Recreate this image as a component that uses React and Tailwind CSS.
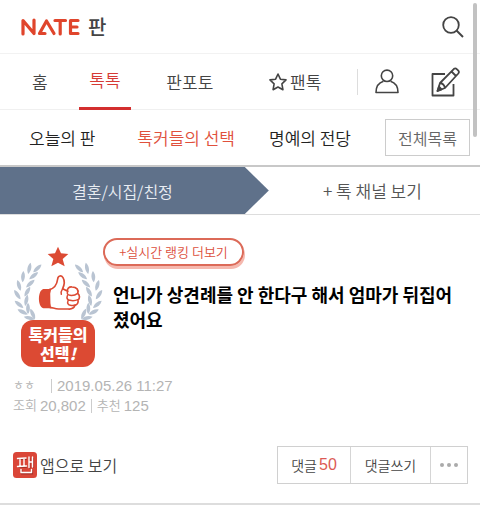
const leaves = [
  [112, 112, 46], [88, 112, 12], [101, 134, 52], [69, 137, 4], [91, 158, 48],
  [57, 163, -16], [82, 182, 30], [52, 191, -34], [79, 208, 12], [57, 220, -50],
  [84, 232, 0], [68, 243, -64], [98, 249, -24], [88, 261, -78],
];

function Branch({ flip }) {
  return (
    <g transform={flip ? 'translate(349 0) scale(-1 1)' : undefined} fill="#b9c4d2">
      {leaves.map(([x, y, a]) => (
        <path
          key={`${x}-${y}`}
          transform={`translate(${x} ${y}) rotate(${a})`}
          d="M0-17C7-8 8 6 0 17C-8 6-7-8 0-17Z"
        />
      ))}
    </g>
  );
}

function Emblem() {
  return (
    <div className="flex w-[90px] shrink-0 flex-col items-center">
      <svg viewBox="39 45 270 222" className="h-[74px] w-[90px]" aria-hidden="true">
        <path d="M174 47L183 67L205 69L188 84L194 106L174 95L154 106L160 84L143 69L165 67Z" fill="#dc4a33" />
        <Branch />
        <Branch flip />
        <path
          d="M148 176C164 172 171 160 173 144C174 133 184 132 189 140C195 150 193 162 188 173L203 181C200 173 207 167 216 168C230 168 237 177 233 187C240 192 240 202 234 207C236 216 231 222 225 223C222 232 214 235 204 234H176C164 234 157 229 149 229Z"
          fill="#fff" stroke="#dc4a33" strokeWidth="5" strokeLinejoin="round"
        />
        <path d="M154 174H130C113 178 112 226 130 232H154C147 212 147 192 154 174Z" fill="#dc4a33" />
        <path
          d="M203 181C200 188 203 193 210 193C219 194 228 191 233 187M202 194C199 202 203 208 210 208C219 210 229 208 234 206M204 209C201 217 205 222 211 223C216 224 222 224 226 222M188 173C184 179 182 184 184 190"
          fill="none" stroke="#dc4a33" strokeWidth="4.500" strokeLinecap="round"
        />
      </svg>
      <div className="flex h-[47px] w-[74px] flex-col items-center justify-center rounded-xl bg-[#dc4a33] text-base leading-[19px] font-black text-white">
        <span>톡커들의</span>
        <span>선택<i>!</i></span>
      </div>
    </div>
  );
}

function NateLogo() {
  return (
    <svg viewBox="0 0 59 18" className="h-[18px] w-[59px]" role="img" aria-label="NATE">
      <g fill="none" stroke="#e0452c" strokeWidth="3.200" strokeLinecap="round" strokeLinejoin="round">
        <path d="M2 16V2.500L13 15.500V2" />
        <path d="M24 15.500H18.500L25.500 3L33 15.500" />
        <path d="M34 2.500H44.500M39.200 2.500V16" />
        <path d="M57 2.500H49.500V15.500H57M49.500 9H56" />
      </g>
    </svg>
  );
}

function SearchIcon() {
  return (
    <svg viewBox="0 0 22 22" className="size-[22px]" fill="none" stroke="#444" strokeWidth="1.800" aria-hidden="true">
      <circle cx="9" cy="9" r="7.800" />
      <path d="M14.500 14.500L21 21" strokeWidth="2" />
    </svg>
  );
}

function StarIcon() {
  return (
    <svg viewBox="0 0 18 18" className="size-[18px]" fill="none" stroke="#444" strokeWidth="1.600" strokeLinejoin="round" aria-hidden="true">
      <path d="M9 1L11.400 6.200L17 6.900L12.900 10.800L13.900 16.700L9 14L4.100 16.700L5.100 10.800L1 6.900L6.600 6.200Z" />
    </svg>
  );
}

function PersonIcon() {
  return (
    <svg viewBox="0 0 24 25" className="h-[25px] w-6" fill="none" stroke="#444" strokeWidth="1.600" strokeLinejoin="round" aria-hidden="true">
      <circle cx="12" cy="6.800" r="5.700" />
      <path d="M8.500 12.300C4.500 13.500 1 17 1 23.500H23C23 17 19.500 13.500 15.500 12.300" />
    </svg>
  );
}

function WriteIcon() {
  return (
    <svg viewBox="0 0 29 30" className="h-[30px] w-[29px]" fill="none" stroke="#444" strokeWidth="1.800" strokeLinejoin="round" aria-hidden="true">
      <path d="M14 7H1.500V28.500H22.500V17" />
      <path d="M6.500 24L9 16L23 1.800Q24.500 .8 26 2.300L27.300 3.700Q28.500 5 27.300 6.500L14 21L6.500 24ZM9 16Q13 16.500 14 21M20.500 4.500L25 9" />
      <path d="M6.500 24L8 19.500L10.500 22.300Z" fill="#444" />
    </svg>
  );
}

function AppIcon() {
  return (
    <svg viewBox="0 0 24 26" className="h-[26px] w-6" aria-hidden="true">
      <rect width="24" height="26" rx="3.500" fill="#da4638" />
      <g fill="none" stroke="#a8322a" strokeWidth="1.500" transform="translate(.8 .8)">
        <path d="M4.500 6.500H13M4.500 14.500H13M16 5V16M19.500 5V15M8 17V21H18.500V17" />
      </g>
      <g fill="none" stroke="#fff" strokeWidth="1.400" strokeLinecap="round" strokeLinejoin="round">
        <path d="M4.500 6.500L13 6M7 7V14M11 7V14M4.500 14.500L13.500 14M16 5V15.500M19.500 5V15M16 10H19.500M8 17.500V20.500H18.500V17.500" />
      </g>
    </svg>
  );
}

export default function App() {
  return (
    <div className="relative w-full bg-white font-['Noto_Sans_CJK_KR',sans-serif] text-[17px] leading-[22px] font-[350] text-[#444]">
      <div className="absolute top-[3px] right-[3px] h-[134px] w-1 rounded-full bg-[#c2c2c2]" />

      <header className="flex h-[54px] items-center justify-between border-b border-[#f2f2f2] pr-4 pl-[21px]">
        <a href="#home" className="flex items-center gap-2">
          <NateLogo />
          <span className="text-xl font-medium">판</span>
        </a>
        <button type="button" aria-label="검색"><SearchIcon /></button>
      </header>

      <nav className="flex h-14 items-center justify-between border-b border-[#f0f0f0] pr-5 pl-8">
        <a href="#home">홈</a>
        <a href="#talk" className="-ml-1 flex h-14 items-center border-b-[3px] border-[#d32f2f] px-[10px] text-[#d63a35]">톡톡</a>
        <a href="#photo" className="mr-5">판포토</a>
        <a href="#fan" className="flex items-center gap-[3px]"><StarIcon />팬톡</a>
        <div className="flex items-center">
          <span className="mr-[17px] h-[26px] w-px bg-[#ddd]" />
          <button type="button" aria-label="내 정보" className="mr-8"><PersonIcon /></button>
          <button type="button" aria-label="글쓰기"><WriteIcon /></button>
        </div>
      </nav>

      <nav className="flex h-[55px] items-center justify-between pr-[10px] pl-[29px] text-[#222]">
        <a href="#today">오늘의 판</a>
        <a href="#choice" className="ml-2 text-[#e0503c]">톡커들의 선택</a>
        <a href="#fame">명예의 전당</a>
        <button type="button" className="h-[37px] w-[85px] border border-[#ccc] text-base text-[#666]">전체목록</button>
      </nav>

      <div className="flex h-[50px] border-t-2 border-b border-t-[#c8c8c8] border-b-[#ddd]">
        <a href="#wedding" className="flex w-[56%] items-center justify-center bg-[#5f718a] pr-6 text-base text-[#e9edf3] [clip-path:polygon(0_0,calc(100%-24px)_0,100%_50%,calc(100%-24px)_100%,0_100%)]">
          결혼/시집/친정
        </a>
        <a href="#channel" className="flex flex-1 items-center justify-center pr-1 text-[#555]">+ 톡 채널 보기</a>
      </div>

      <main>
        <section className="flex gap-2 pt-[23px] pr-6 pl-[13px]">
          <div className="pt-2"><Emblem /></div>
          <div className="flex-1">
            <button type="button" className="-ml-2 h-7 w-[141px] rounded-full border-2 border-[#dc6a58] text-[13px] leading-6 text-[#dc4f3d] shadow-[1px_3px_0_#f5b8ae]">+실시간 랭킹 더보기</button>
            <h1 className="mt-4 pl-[2px] text-lg leading-[25px] font-bold text-black">
              언니가 상견례를 안 한다구 해서 엄마가 뒤집어졌어요
            </h1>
          </div>
        </section>

        <div className="px-[13px] pt-[9px] font-['Liberation_Sans','Noto_Sans_CJK_KR',sans-serif] text-[15px] leading-5 text-[#b4b4b4]">
          <p className="flex items-center">
            <span className="w-[38px] text-xs">ㅎㅎ</span>
            <span className="mr-[5px] h-[14px] w-px bg-[#ccc]" />
            <time>2019.05.26 11:27</time>
          </p>
          <p className="flex items-center">
            <span className="mr-[3px] text-[13px]">조회</span>20,802
            <span className="mx-[5px] h-[14px] w-px bg-[#ccc]" />
            <span className="mr-[3px] text-[13px]">추천</span>125
          </p>
        </div>

        <div className="mt-[30px] flex items-center justify-between border-b-2 border-[#ddd] pr-3 pb-[19px] pl-[13px]">
          <a href="#app" className="flex items-center gap-[3px] text-base"><AppIcon />앱으로 보기</a>
          <div className="flex h-[38px] divide-x divide-[#d5d5d5] border border-[#d0d0d0] text-sm">
            <button type="button" className="flex w-[73px] items-center justify-center gap-[2px]">
              댓글<span className="font-['Liberation_Sans',sans-serif] text-base text-[#dc5a55]">50</span>
            </button>
            <button type="button" className="w-20">댓글쓰기</button>
            <button type="button" aria-label="더보기" className="flex w-9 items-center justify-center gap-[3px]">
              <span className="size-1 rounded-full bg-[#aaa]" />
              <span className="size-1 rounded-full bg-[#aaa]" />
              <span className="size-1 rounded-full bg-[#aaa]" />
            </button>
          </div>
        </div>
      </main>
    </div>
  );
}
